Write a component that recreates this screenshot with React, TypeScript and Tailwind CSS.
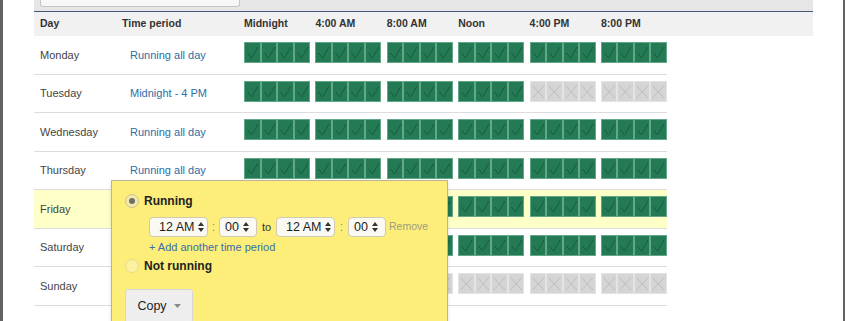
import React from "react";

// Friday to Sunday sit under the open editor, so their period text is not shown
const rows = [
  { day: "Monday", period: "Running all day", on: 24 },
  { day: "Tuesday", period: "Midnight - 4 PM", on: 16 },
  { day: "Wednesday", period: "Running all day", on: 24 },
  { day: "Thursday", period: "Running all day", on: 24 },
  { day: "Friday", period: "", on: 24, active: true },
  { day: "Saturday", period: "", on: 24 },
  { day: "Sunday", period: "", on: 0 },
];

const hours = ["Midnight", "4:00 AM", "8:00 AM", "Noon", "4:00 PM", "8:00 PM"];

function Cell({ on }: { on: boolean }) {
  if (on) {
    return (
      <div className="w-[16.5px] h-[21px] bg-[#237a55] border border-[#62a787]">
        <svg viewBox="0 0 14.5 19" className="w-full h-full block" preserveAspectRatio="none">
          <path d="M2.5 10 L6.5 15 L13 4" stroke="#185c3e" strokeWidth="1" fill="none" />
        </svg>
      </div>
    );
  }
  return (
    <div className="w-[16.5px] h-[21px] bg-[#d5d5d5] border border-[#e4e4e4]">
      <svg viewBox="0 0 14.5 19" className="w-full h-full block" preserveAspectRatio="none">
        <path d="M1.5 3.5 L13 16 M13 3.5 L1.5 16" stroke="#bdbdbd" strokeWidth="1" fill="none" />
      </svg>
    </div>
  );
}

function Cells({ on }: { on: number }) {
  return (
    <div className="flex gap-[5.4px]">
      {hours.map((h, g) => (
        <div key={h} className="flex">
          {[0, 1, 2, 3].map((i) => (
            <Cell key={i} on={g * 4 + i < on} />
          ))}
        </div>
      ))}
    </div>
  );
}

function Arrows() {
  return (
    <svg viewBox="0 0 6 10" className="w-[6px] h-[10px]">
      <polygon points="0,4 3,0 6,4" fill="#333" />
      <polygon points="0,6 3,10 6,6" fill="#333" />
    </svg>
  );
}

function Select({ value, w, pl }: { value: string; w: string; pl: string }) {
  return (
    <div className={`${w} ${pl} h-[20px] flex items-center gap-[4px] rounded-[4px] border border-[#cfcab0] bg-[#fbfaf2] text-[12.5px] text-[#222]`}>
      <span>{value}</span>
      <Arrows />
    </div>
  );
}

function Radio({ checked }: { checked: boolean }) {
  return (
    <div className={`w-[14px] h-[14px] rounded-full flex items-center justify-center border ${checked ? "border-[#cbc28f] bg-[#f3eaa9]" : "border-[#e6dc90] bg-[#fbf1a0]"}`}>
      {checked && <div className="w-[6px] h-[6px] rounded-full bg-[#6f6f6f]" />}
    </div>
  );
}

export default function App() {
  return (
    <div className="w-[845px] h-[321px] overflow-hidden bg-white border-l-[3px] border-r-[2px] border-[#626262] flex font-['Liberation_Sans',Arial,sans-serif]">
      <div className="w-[31px] shrink-0" />
      <div className="relative w-[779px] shrink-0">
        <div className="h-[11px] bg-[#e6e6e6]">
          <div className="ml-[6px] w-[200px] h-[7px] bg-[#f7f7f7] border border-t-0 border-[#c6c6c6] rounded-b-[3px]" />
        </div>
        <div className="h-[25px] bg-[#f1f1f1] border-t border-[#3f5b78] flex items-center text-[10.5px] font-bold text-[#333]">
          <div className="w-[88px] pl-[6px]">Day</div>
          <div className="w-[122px]">Time period</div>
          <div className="flex gap-[5.4px]">
            {hours.map((h) => (
              <div key={h} className="w-[66px]">{h}</div>
            ))}
          </div>
        </div>
        <div className="w-[633px]">
          {rows.map((r) => (
            <div
              key={r.day}
              className={`h-[38.5px] flex border-b border-[#dcdcdc] ${r.active ? "bg-[#ffffc8]" : ""}`}
            >
              <div className="w-[88px] pl-[6px] flex items-center text-[11px] text-[#444]">{r.day}</div>
              <div className="w-[122px] pl-[8px] flex items-center text-[11px] text-[#2a6ea8]">{r.period}</div>
              <div className="pt-[6px]">
                <Cells on={r.on} />
              </div>
            </div>
          ))}
        </div>

        <div className="absolute left-[77px] top-[180px] w-[337px] h-[160px] bg-[#fcee78] border border-[#bcb698] pl-[13px] pt-[12px] shadow-[0_1px_3px_rgba(0,0,0,0.15)]">
          <div className="flex items-center gap-[5px] h-[16px]">
            <Radio checked />
            <span className="text-[12px] font-bold text-[#222]">Running</span>
          </div>
          <div className="mt-[8px] ml-[24px] flex items-center">
            <Select value="12 AM" w="w-[59px]" pl="pl-[9px]" />
            <span className="w-[11px] text-center text-[12px] text-[#8a93a5]">:</span>
            <Select value="00" w="w-[38px]" pl="pl-[5px]" />
            <span className="w-[19px] text-center text-[11px] text-[#333]">to</span>
            <Select value="12 AM" w="w-[59px]" pl="pl-[9px]" />
            <span className="w-[13px] text-center text-[12px] text-[#8a93a5]">:</span>
            <Select value="00" w="w-[38px]" pl="pl-[5px]" />
            <span className="ml-[3px] text-[10.5px] text-[#9e9b86]">Remove</span>
          </div>
          <div className="mt-[3px] ml-[24px] h-[14px] flex items-center text-[11px] text-[#3b6cae]">
            + Add another time period
          </div>
          <div className="mt-[4px] flex items-center gap-[5px] h-[16px]">
            <Radio checked={false} />
            <span className="text-[12px] font-bold text-[#222]">Not running</span>
          </div>
          <div className="mt-[15px] w-[68px] h-[34px] flex items-center justify-center gap-[7px] bg-[#eeeeee] border border-[#d6d6d6] rounded-[3px]">
            <span className="text-[12.5px] text-[#222]">Copy</span>
            <svg viewBox="0 0 7 4" className="w-[7px] h-[4px]">
              <polygon points="0,0 7,0 3.5,4" fill="#8a8a8a" />
            </svg>
          </div>
        </div>
      </div>
      <div className="w-[30px] shrink-0" />
    </div>
  );
}
